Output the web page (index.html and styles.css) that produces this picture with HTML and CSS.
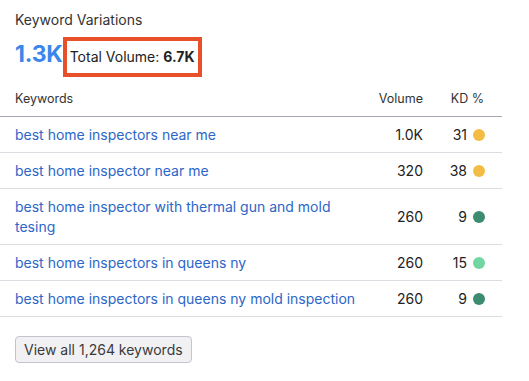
FILE: index.html
```html
<!DOCTYPE html>
<html>
<head>
<meta charset="utf-8">
<link rel="stylesheet" href="styles.css">
</head>
<body>
<div class="card">
  <div class="title">Keyword Variations</div>
  <div class="stats">
    <span class="big">1.3K</span>
    <span class="total">Total Volume: <b>6.7K</b></span>
  </div>
  <table class="kw">
    <colgroup><col class="c-kw"><col class="c-vol"><col class="c-kd"></colgroup>
    <thead>
      <tr><th class="kw-h">Keywords</th><th class="num">Volume</th><th class="num kd-h">KD %</th></tr>
    </thead>
    <tbody>
      <tr><td class="kw-c"><a href="#">best home inspectors near me</a></td><td class="num">1.0K</td><td class="kd">31<span class="dot yellow"></span></td></tr>
      <tr><td class="kw-c"><a href="#">best home inspector near me</a></td><td class="num">320</td><td class="kd">38<span class="dot yellow"></span></td></tr>
      <tr><td class="kw-c"><a href="#">best home inspector with thermal gun and mold tesing</a></td><td class="num">260</td><td class="kd">9<span class="dot green"></span></td></tr>
      <tr><td class="kw-c"><a href="#">best home inspectors in queens ny</a></td><td class="num">260</td><td class="kd">15<span class="dot light"></span></td></tr>
      <tr><td class="kw-c"><a href="#">best home inspectors in queens ny mold inspection</a></td><td class="num">260</td><td class="kd">9<span class="dot green"></span></td></tr>
    </tbody>
  </table>
  <button class="view">View all 1,264 keywords</button>
</div>
</body>
</html>
```

FILE: styles.css
```css
* { box-sizing: border-box; }
html, body { margin: 0; padding: 0; background: #fff; }
body { font-family: Inter, "Noto Sans", sans-serif; color: #222; }
.card { width: 502px; padding-top: 10px; }
.title { font-size: 14px; line-height: 20px; color: #333; padding-left: 15px; }
.stats { display: flex; align-items: baseline; padding-left: 15px; margin-top: 4px; }
.big { font-size: 23px; font-weight: 700; color: #3b86ea; line-height: 40px; letter-spacing: -0.2px; }
.total { font-size: 14px; color: #222; border: 4px solid #e8502a; height: 40px; line-height: 32px; padding: 0 4px 0 3px; margin-left: 0; }
.total b { font-weight: 700; }
.kw { width: 502px; border-collapse: collapse; table-layout: fixed; margin-top: 4px; }
.c-kw { width: 372px; }
.c-vol { width: 51px; }
.c-kd { width: 79px; }
th { font-weight: 400; font-size: 12.5px; color: #333; text-align: left; line-height: 20px; padding: 8px 0 7px 0; border-bottom: 1px solid #a4a7b1; }
th.kw-h { padding-left: 15px; }
th.num { text-align: right; }
th.kd-h { padding-right: 18px; }
td { font-size: 14px; line-height: 20px; padding: 8px 0 7px 0; border-bottom: 1px solid #dcdde2; vertical-align: middle; }
td.kw-c { padding-left: 15px; padding-right: 8px; }
td.kw-c a { color: #2c66c7; text-decoration: none; }
td.num { text-align: right; color: #222; }
td.kd { text-align: right; padding-right: 17px; color: #222; }
.dot { display: inline-block; width: 12px; height: 12px; border-radius: 50%; margin-left: 6px; vertical-align: -1px; }
.yellow { background: #f3bd45; }
.green { background: #3c8c6f; }
.light { background: #72d6a3; }
.view { display: block; margin: 19px 0 0 15px; height: 27px; padding: 0 8px; font-family: Inter, "Noto Sans", sans-serif; font-size: 14px; color: #3a3a3a; background: #f1f1f4; border: 1px solid #c3c5cc; border-radius: 4px; }
```
